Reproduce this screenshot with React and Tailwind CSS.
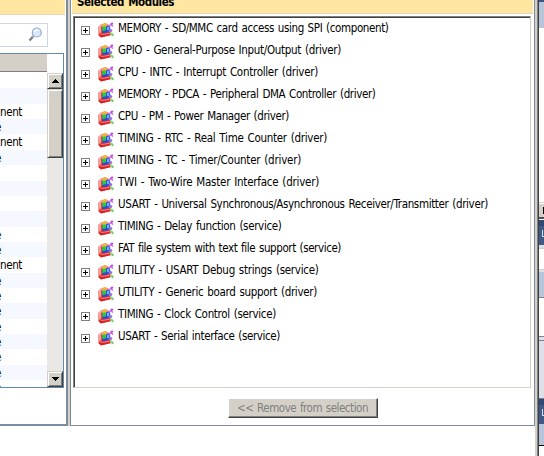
import React from "react";

const modules = [
  ["MEMORY - SD/MMC card access using SPI (component)", 270.5],
  ["GPIO - General-Purpose Input/Output (driver)", 223],
  ["CPU - INTC - Interrupt Controller (driver)", 200],
  ["MEMORY - PDCA - Peripheral DMA Controller (driver)", 257.5],
  ["CPU - PM - Power Manager (driver)", 171],
  ["TIMING - RTC - Real Time Counter (driver)", 209],
  ["TIMING - TC - Timer/Counter (driver)", 183],
  ["TWI - Two-Wire Master Interface (driver)", 201],
  ["USART - Universal Synchronous/Asynchronous Receiver/Transmitter (driver)", 370],
  ["TIMING - Delay function (service)", 163.5],
  ["FAT file system with text file support (service)", 223],
  ["UTILITY - USART Debug strings (service)", 200.5],
  ["UTILITY - Generic board support (driver)", 199],
  ["TIMING - Clock Control (service)", 158],
  ["USART - Serial interface (service)", 162],
];

const leftRows = ["", "", "nent", "e", "nent", "e", "", "", "", "", "e", "e", "nent", "e", "e", "e", "e", "e", "e", "e", "e"];

// Stretches or tightens the letter spacing so that a label fills its column width.
function FitText({ text, width }) {
  const ref = React.useRef(null);
  const [spacing, setSpacing] = React.useState(0);
  React.useLayoutEffect(() => {
    const natural = ref.current.getBoundingClientRect().width;
    setSpacing((width - natural) / text.length);
  }, [text, width]);
  return (
    <span ref={ref} className="inline-block whitespace-nowrap [word-spacing:0.9px]" style={{ letterSpacing: `${spacing}px` }}>
      {text}
    </span>
  );
}

function Plus() {
  return (
    <svg width="9" height="9" className="mt-[6px] shrink-0" shapeRendering="crispEdges">
      <rect x=".5" y=".5" width="8" height="8" fill="#fff" stroke="#808080" />
      <path d="M2 4.5h5M4.5 2v5" stroke="#000" />
    </svg>
  );
}

function ModuleIcon() {
  return (
    <svg width="16" height="16" viewBox="0 0 16 16" className="mt-px shrink-0">
      <path d="M0.3 5 L3 2.5 L10 2 L12.5 8 L12.5 13 L3 15.3 L0.5 13Z" fill="#f0524a" />
      <path d="M0.3 5 L3 2.5 L5 3 L3 5 L3 10.5 L1 11Z" fill="#f8a29b" />
      <path d="M1 11 L12 10.5 L12.5 13.2 L3 15.5 L0.7 13.5Z" fill="#d92024" />
      <path d="M1 11 L3.5 12.4 L11.5 11.5" stroke="#ff8b7c" fill="none" />
      <path d="M3.5 5 L6 3.5 L9 4 L9 10.5 L4 11Z" fill="#6b3a70" />
      <path d="M4 2 L7.5 0.8 L10 2.5 L9 5 L4.5 5Z" fill="#f0b04a" />
      <path d="M4 5 L8 4.5 L8 9 L4.5 9.5Z" fill="#2bc845" />
      <path d="M8 4 L12 3.5 L12.5 9 L9 10.5Z" fill="#3f50f0" />
      <path d="M9 5h2.2v3h-2.2z" fill="#4cc5f2" />
      <path d="M4.5 9 L9 8 L10 10.3 L5.5 11Z" fill="#2848e0" />
      <path d="M10.5 4.5 L14 1.5 M12 2 L15 4.5" stroke="#cf62e4" strokeWidth="1.4" />
      <circle cx="14" cy="1.6" r="1.2" fill="#b94bd8" />
      <path d="M12 8 L13 11.5 L15 12.5" stroke="#7fda74" strokeWidth="1.4" fill="none" />
      <circle cx="13" cy="8.6" r="1.3" fill="#b45ce6" />
      <circle cx="14.5" cy="13" r="1.2" fill="#6dd05e" />
    </svg>
  );
}

function ScrollButton({ down }) {
  return (
    <div className="flex h-4 w-4 shrink-0 items-center justify-center border border-t-[#d4d0c8] border-l-[#d4d0c8] border-r-[#404040] border-b-[#404040] bg-[#d4d0c8] shadow-[inset_1px_1px_0_#fff,inset_-1px_-1px_0_#808080]">
      <svg width="7" height="4" shapeRendering="crispEdges">
        <path d={down ? "M0 0h7v1h-1v1h-1v1h-1v1h-1v-1h-1v-1h-1v-1h-1z" : "M3 0h1v1h1v1h1v1h1v1h-7v-1h1v-1h1v-1h1z"} fill="#000" />
      </svg>
    </div>
  );
}

function LeftPanel() {
  return (
    <div className="flex h-[426px] w-[68px] shrink-0 flex-col border-r-2 border-b-2 border-[#7b8c9e] bg-white">
      <div className="h-[15px] w-[65px] shrink-0 border-b border-[#e5d9bb] bg-[#ffe6a1]" />
      <div className="mt-2 flex h-6 w-12 shrink-0 items-center justify-end border border-l-0 border-[#d0d6e5] pr-[4px]">
        <svg width="15" height="16" viewBox="0 0 15 16">
          <path d="M5.5 9 L1.5 13.5" stroke="#777b85" strokeWidth="2.2" />
          <path d="M6 8.5 L4.5 10" stroke="#b8bbc2" strokeWidth="2" />
          <circle cx="8.8" cy="5.5" r="4.5" fill="#d8eafa" stroke="#94a8d0" strokeWidth="1.2" />
          <path d="M6 5 Q7 2.5 10 3.3" stroke="#fff" strokeWidth="1.3" fill="none" />
        </svg>
      </div>
      <div className="mt-[6px] flex h-[335px] w-16 shrink-0 flex-col border border-l-0 border-[#6488a8]">
        <div className="h-[18px] w-[47px] shrink-0 border-b border-[#808080] bg-[#d4d0c8]" />
        <div className="flex min-h-0 flex-1">
          <div className="w-[47px] shrink-0 overflow-hidden pt-px">
            {leftRows.map((t, i) => (
              <div
                key={i}
                className={`h-[15.36px] overflow-hidden text-[11.5px] leading-[16px] text-black ${i % 2 ? "bg-[#f6f8ff]" : "bg-white"}`}
              >
                {t === "nent" ? <FitText text="nent" width={22} /> : <span className="-ml-[5px]">{t}</span>}
              </div>
            ))}
          </div>
          <div className="mt-px flex w-4 flex-col bg-[#e9e8e4]">
            <ScrollButton />
            <div className="h-[69px] w-4 border border-t-[#d4d0c8] border-l-[#d4d0c8] border-r-[#404040] border-b-[#404040] bg-[#d4d0c8] shadow-[inset_1px_1px_0_#fff,inset_-1px_-1px_0_#808080]" />
            <div className="flex-1" />
            <ScrollButton down />
          </div>
        </div>
      </div>
    </div>
  );
}

function RightPanel() {
  return (
    <div className="flex h-[426px] w-[465px] shrink-0 flex-col border-x border-b border-[#7b8c9e] bg-white">
      <div className="mx-px h-[14px] shrink-0 overflow-hidden border-b border-[#ddd5bd] bg-[#ffe6a1] pl-[5px] text-[11.5px] leading-[15px] font-bold text-black">
        <div className="-mt-[5px]"><FitText text="Selected Modules" width={97} /></div>
      </div>
      <div className="mt-[2px] mr-[3px] ml-[2px] h-[372px] shrink-0 border border-t-[#808080] border-l-[#808080] border-r-[#d4d0c8] border-b-[#d4d0c8] bg-white pt-[3px] pl-[7px] shadow-[inset_1px_1px_0_#404040]">
        {modules.map(([text, width]) => (
          <div key={text} className="flex h-[22px] items-start text-[11.5px] text-black">
            <Plus />
            <div className="w-2 shrink-0" />
            <div className="pt-px"><ModuleIcon /></div>
            <div className="-mt-[2px] ml-1 leading-[20px]"><FitText text={text} width={width} /></div>
          </div>
        ))}
      </div>
      <div className="mt-[10px] ml-[157px] flex h-5 w-[150px] items-center border border-t-white border-l-white border-r-[#404040] border-b-[#404040] bg-[#d4d0c8] pl-2 text-[11.5px] leading-[16px] text-[#808080] shadow-[inset_-1px_-1px_0_#808080]">
        <FitText text="<< Remove from selection" width={131} />
      </div>
    </div>
  );
}

function EdgeWindow() {
  return (
    <div className="flex w-[5px] shrink-0 flex-col overflow-hidden bg-white">
      <div className="h-[2px] shrink-0 bg-[#3d5484]" />
      <div className="h-[26px] shrink-0 bg-[#b7c5da]" />
      <div className="h-[174px] shrink-0" />
      <div className="h-px shrink-0 bg-[#d4d0c8]" />
      <div className="mt-px flex h-[13px] shrink-0 items-center justify-end bg-[#d4d0c8]">
        <div className="h-[7px] w-px bg-black" />
      </div>
      <div className="h-[2px] shrink-0 bg-[#505050]" />
      <div className="mt-px h-[6px] shrink-0 bg-[#304873]" />
      <div className="flex h-[19px] shrink-0 justify-end bg-[#405986] pt-1">
        <div className="h-[7px] w-[2px] border-b border-l border-[#d9e0eb]" />
      </div>
      <div className="h-[3px] shrink-0 bg-[#dde0e9]" />
      <div className="h-px shrink-0 bg-[#d4d0c8]" />
      <div className="h-5 shrink-0" />
      <div className="h-px shrink-0 bg-[#d4d0c8]" />
      <div className="h-[2px] shrink-0 bg-[#dde0e9]" />
      <div className="h-[25px] shrink-0 bg-[#b7c5da]" />
      <div className="h-px shrink-0 bg-[#808080]" />
      <div className="h-[38px] shrink-0" />
      <div className="h-px shrink-0 bg-[#808080]" />
      <div className="h-[3px] shrink-0 bg-[#dde0e9]" />
      <div className="h-px shrink-0 bg-[#808080]" />
      <div className="h-[57px] shrink-0 bg-[#dde0e9]" />
      <div className="h-px shrink-0 bg-[#808080]" />
      <div className="h-[6px] shrink-0 bg-[#304873]" />
      <div className="flex h-[19px] shrink-0 justify-end bg-[#405986] pt-1">
        <div className="h-[7px] w-[2px] border-b border-l border-[#d9e0eb]" />
      </div>
      <div className="h-[21px] shrink-0 bg-[#b7c5da]" />
      <div className="h-px shrink-0 bg-black" />
    </div>
  );
}

export default function App() {
  return (
    <div className="flex h-[456px] w-[544px] overflow-hidden bg-white font-['DejaVu_Sans_Condensed','DejaVu_Sans',sans-serif] [font-stretch:condensed]">
      <LeftPanel />
      <div className="h-[426px] w-[2px] shrink-0 bg-[#d4d0c8]" />
      <RightPanel />
      <div className="w-[2px] shrink-0 bg-[#d4d0c8]" />
      <div className="w-px shrink-0 bg-[#808080]" />
      <div className="w-px shrink-0 bg-[#404040]" />
      <EdgeWindow />
    </div>
  );
}
